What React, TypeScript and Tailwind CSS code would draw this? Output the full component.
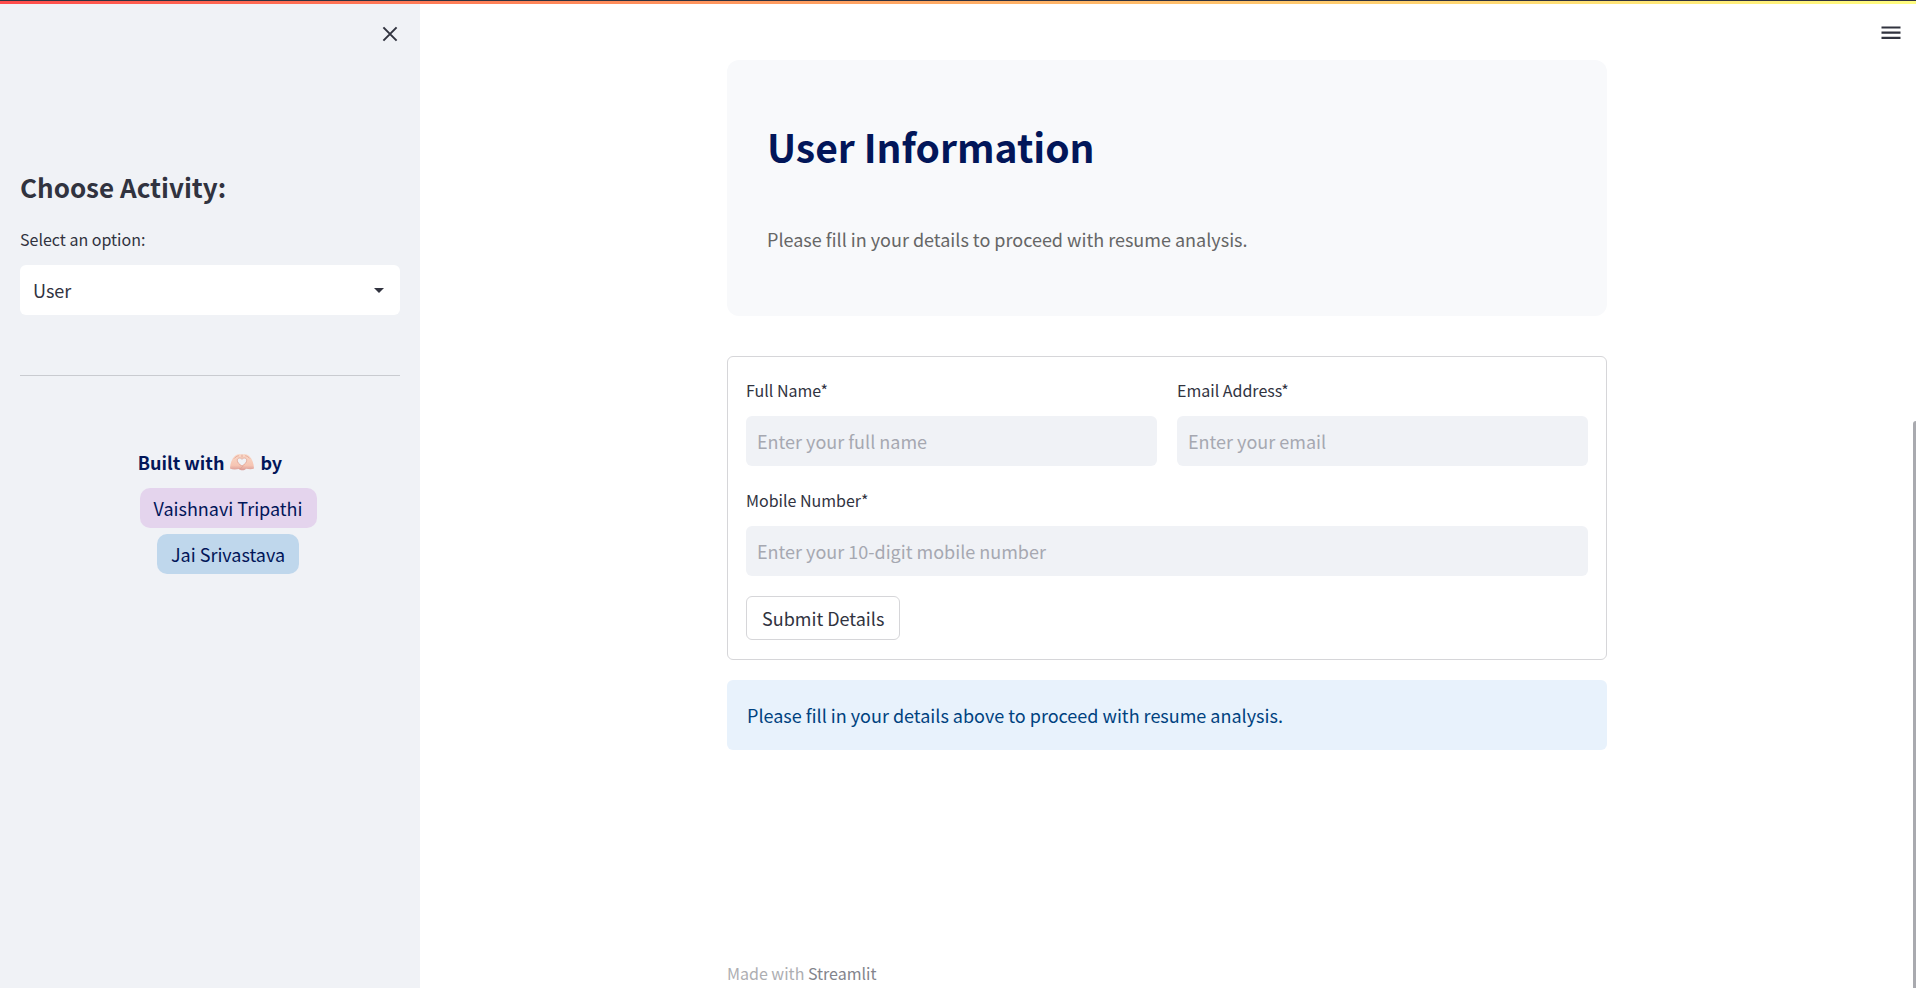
import { useState } from "react";

function CloseIcon() {
  return (
    <svg width="20" height="20" viewBox="0 0 20 20" fill="none" stroke="#31333f" strokeWidth="2" aria-hidden="true">
      <path d="M3.4 3.4 16.6 16.6M16.6 3.4 3.4 16.6" />
    </svg>
  );
}

function MenuIcon() {
  return (
    <svg width="20" height="20" viewBox="0 0 20 20" fill="#31333f" aria-hidden="true">
      <path d="M.5 3.4h19v2.2H.5zM.5 8.6h19v2.200H.5zM.5 13.800h19V16H.5z" />
    </svg>
  );
}

function HeartHands() {
  return (
    <svg className="inline-block" width="24" height="18" viewBox="0 0 24 18" role="img" aria-label="heart hands">
      <defs>
        <linearGradient id="skin" x1="0" y1="0" x2="0" y2="1">
          <stop offset="0" stopColor="#f9d9c8" />
          <stop offset="0.7" stopColor="#f6c5b3" />
          <stop offset="1" stopColor="#d99a96" />
        </linearGradient>
      </defs>
      <path
        d="M0 15.5C.2 10 1.800 6 4.600 3.200 6.800 1 10 .3 12 1.500 14 .3 17.200 1 19.400 3.200 22.200 6 23.800 10 24 15.500 21.500 16.800 18.500 16.200 16 15.800 14.500 17.600 10.800 18 9 16 6 16.600 2.500 16.800 0 15.500Z"
        fill="url(#skin)"
      />
      <path
        d="M12 13C9 11.200 7.300 9.400 7.300 7.300 7.300 4.700 10.600 4.200 12 6.300 13.400 4.200 16.700 4.700 16.700 7.300 16.700 9.400 15 11.200 12 13Z"
        fill="#f0f2f6"
        stroke="#dd9a8a"
        strokeWidth=".7"
      />
      <path
        d="M12 1.500V4.600M4.200 5.500C5.500 4 7 3 8.800 2.700M19.800 5.500C18.500 4 17 3 15.200 2.700M9 16C10.500 15.800 12 14.800 13 13.200"
        fill="none"
        stroke="#dd9a8a"
        strokeWidth=".7"
      />
    </svg>
  );
}

type FieldProps = { id: string; label: string; type: string; placeholder: string };

function Field({ id, label, type, placeholder }: FieldProps) {
  return (
    <div className="flex flex-col gap-3.5">
      <label htmlFor={id} className="text-base leading-6">
        {label}
      </label>
      <input
        id={id}
        type={type}
        placeholder={placeholder}
        className="h-[50px] w-full rounded-md bg-[#f0f2f6] px-[11px] text-lg leading-6 outline-none placeholder:text-[#a6a8b1]"
      />
    </div>
  );
}

function Sidebar() {
  const [activity, setActivity] = useState("User");
  return (
    <aside className="flex w-[420px] shrink-0 flex-col bg-[#f0f2f6] px-5">
      <div className="flex justify-end pt-5">
        <button type="button" aria-label="Close sidebar">
          <CloseIcon />
        </button>
      </div>
      <h2 className="mt-[125px] text-[26px] leading-9 font-bold">Choose Activity:</h2>
      <label htmlFor="activity" className="mt-[22px] text-base leading-6">
        Select an option:
      </label>
      <div className="mt-3.5 grid items-center">
        <select
          id="activity"
          value={activity}
          onChange={(e) => setActivity(e.target.value)}
          className="col-start-1 row-start-1 h-[50px] w-full appearance-none rounded-md bg-white px-[13px] text-lg leading-6"
        >
          <option>User</option>
          <option>Feedback</option>
          <option>About</option>
          <option>Admin</option>
        </select>
        <svg className="pointer-events-none col-start-1 row-start-1 mr-4 justify-self-end" width="10" height="6" viewBox="0 0 10 6" aria-hidden="true">
          <path d="M0 1h10L5 6z" fill="#31333f" />
        </svg>
      </div>
      <hr className="mt-[60px] border-[#c9cbd0]" />
      <div className="mt-[72px] flex flex-col items-center text-lg leading-7 text-[#021659]">
        <p className="flex items-center gap-1.5 font-bold">
          Built with <HeartHands /> by
        </p>
        <div className="mt-3 ml-9 flex flex-col items-center gap-1.5">
          <a href="#vaishnavi" className="rounded-[10px] bg-[#e4d4ed] px-3.5 py-1.5">
            Vaishnavi Tripathi
          </a>
          <a href="#jai" className="rounded-[10px] bg-[#bfd7ec] px-3.5 py-1.5">
            Jai Srivastava
          </a>
        </div>
      </div>
    </aside>
  );
}

export default function App() {
  return (
    <div className="flex min-h-screen flex-col bg-white font-['Noto_Sans_CJK_SC',sans-serif] text-[#31333f]">
      <div className="h-1 border-t border-[#31333f] bg-linear-to-r from-[#ff4b4b] to-[#fffd80]" />
      <div className="flex grow">
        <Sidebar />
        <div className="relative flex grow flex-col">
          <button type="button" aria-label="Main menu" className="absolute top-[19px] right-[13px]">
            <MenuIcon />
          </button>
          <main className="mx-auto mt-14 flex w-full max-w-[880px] grow flex-col">
            <section className="rounded-xl bg-[#f8f9fb] px-10 pt-[58px] pb-[63px]">
              <h1 className="text-[39px] leading-[56px] font-bold text-[#021659]">User Information</h1>
              <p className="mt-[51px] text-lg leading-7 text-[#666666]">
                Please fill in your details to proceed with resume analysis.
              </p>
            </section>
            <form
              className="mt-10 flex flex-col gap-[22px] rounded-md border border-[#d6d6d9] px-[18px] pt-[21px] pb-[19px]"
              onSubmit={(e) => e.preventDefault()}
            >
              <div className="grid grid-cols-2 gap-5">
                <Field id="name" label="Full Name*" type="text" placeholder="Enter your full name" />
                <Field id="email" label="Email Address*" type="email" placeholder="Enter your email" />
              </div>
              <Field id="mobile" label="Mobile Number*" type="tel" placeholder="Enter your 10-digit mobile number" />
              <button
                type="submit"
                className="-mt-0.5 h-11 self-start rounded-md border border-[#d6d6d9] bg-white px-[15px] text-lg leading-6"
              >
                Submit Details
              </button>
            </form>
            <div role="status" className="mt-5 rounded-md bg-[#e8f2fc] px-5 py-[21px] text-lg leading-7 text-[#004280]">
              Please fill in your details above to proceed with resume analysis.
            </div>
            <footer className="mt-auto pb-[3px] text-base leading-6 text-[#adaeb2]">
              Made with{" "}
              <a href="#streamlit" className="text-[#83848c]">
                Streamlit
              </a>
            </footer>
          </main>
        </div>
        <div className="-ml-px flex w-[3px] flex-col pt-[417px]">
          <div className="grow rounded-tl-sm bg-[#a9aaaf]" />
        </div>
      </div>
    </div>
  );
}
